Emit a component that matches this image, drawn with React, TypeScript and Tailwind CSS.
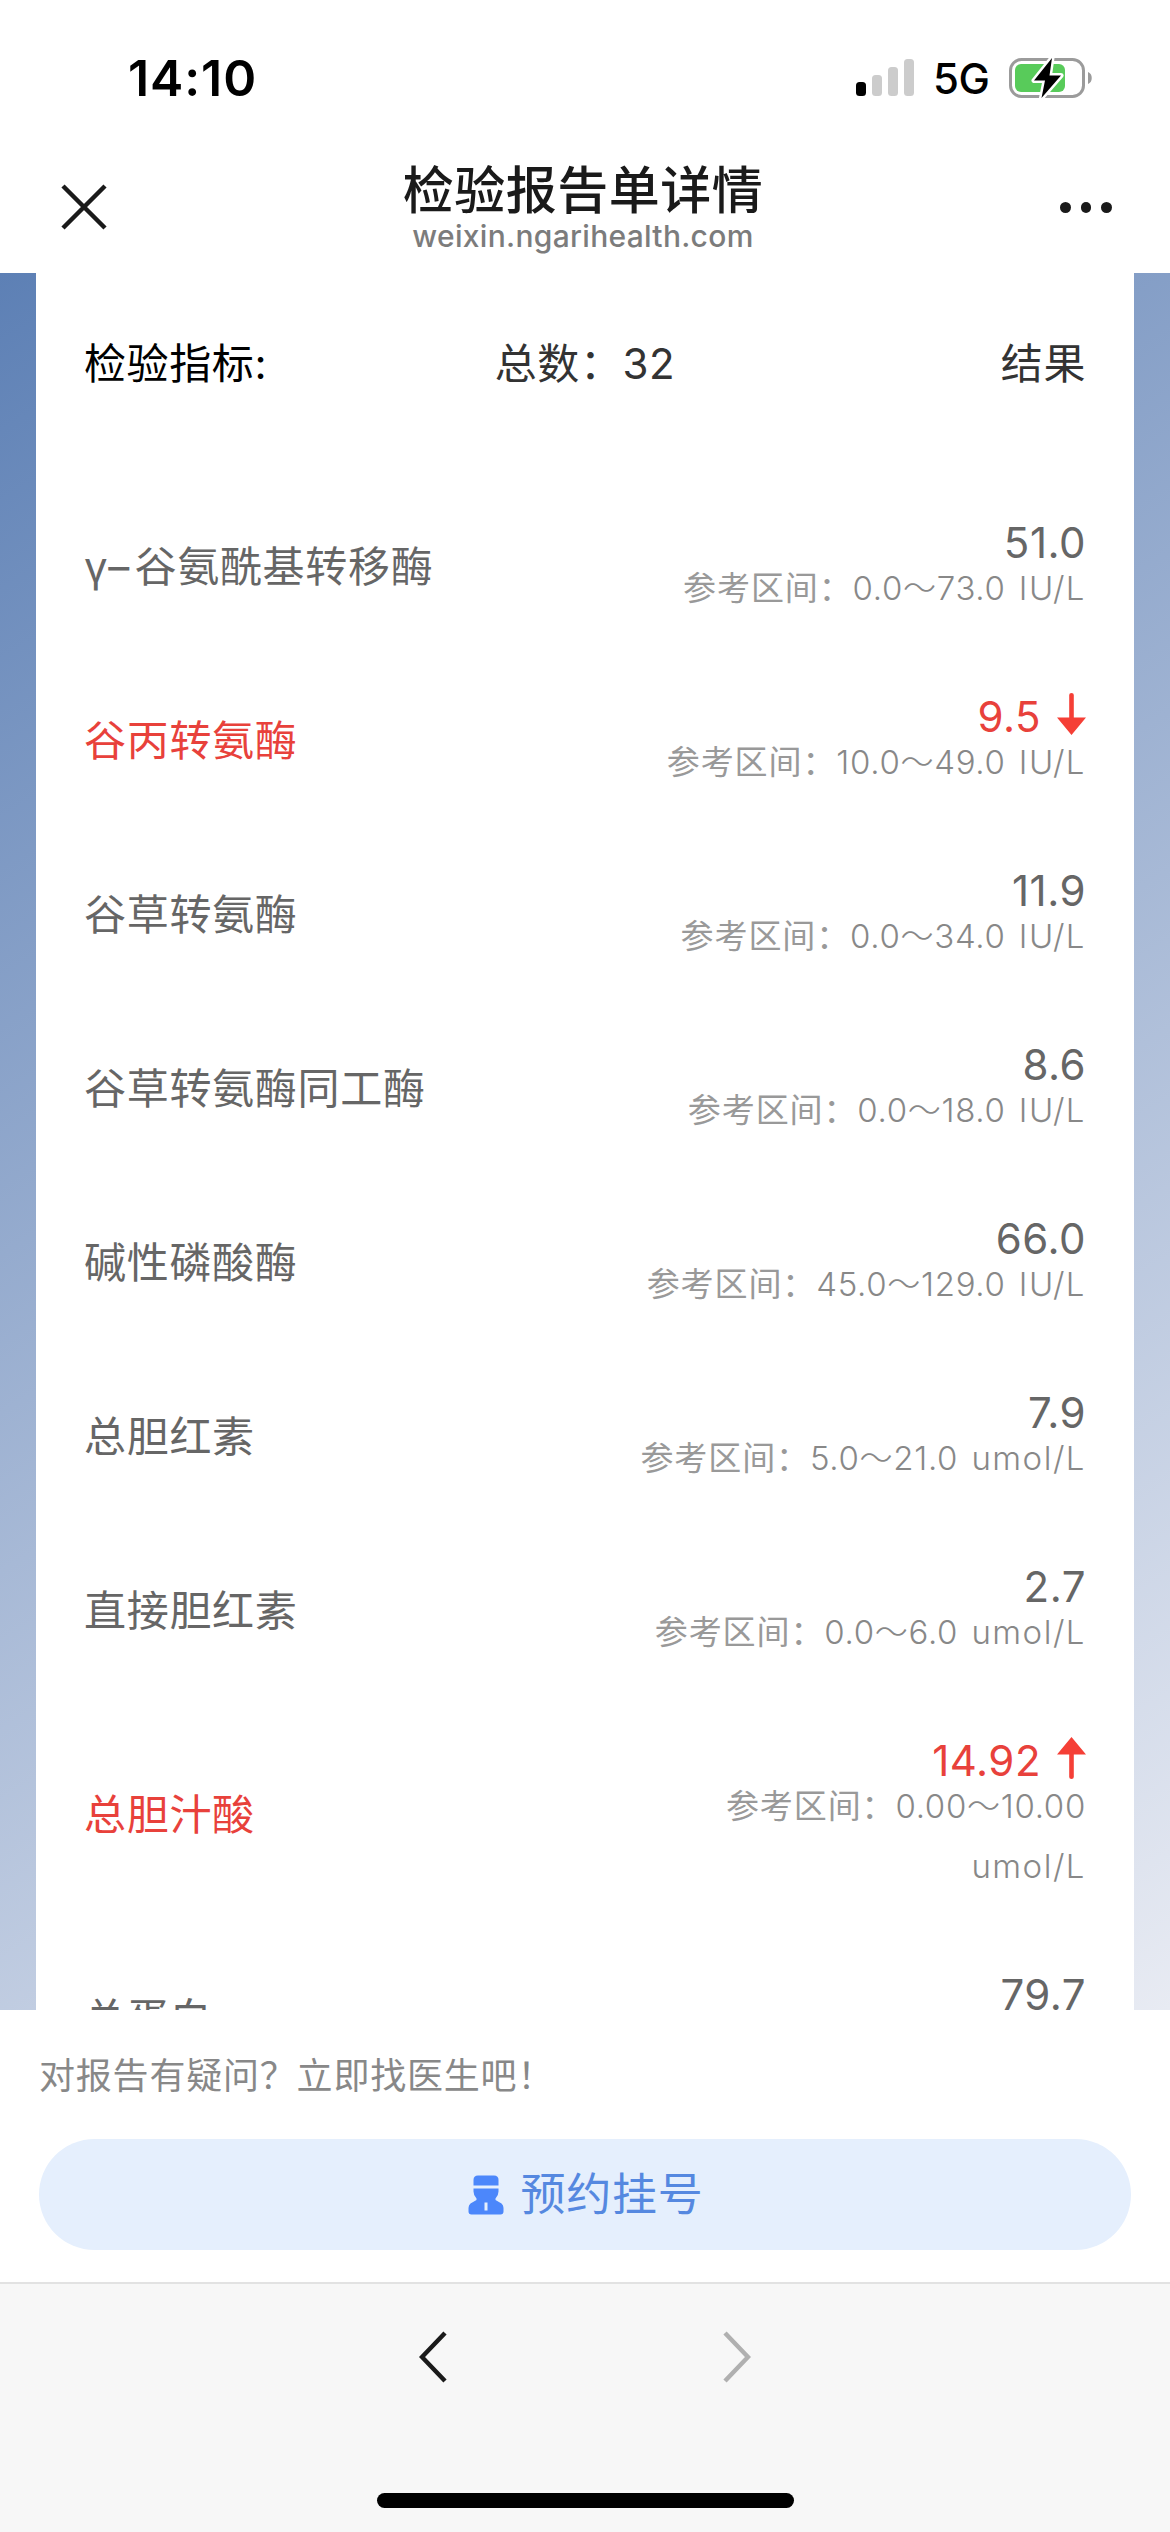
interface ReportItem {
	name: string;
	value: string;
	range: string;
	unit: string;
	trend?: "up" | "down";
}

const items: ReportItem[] = [
	{ name: "γ–\u200a谷氨酰基转移酶", value: "51.0", range: "0.0～73.0", unit: "IU/L" },
	{ name: "谷丙转氨酶", value: "9.5", range: "10.0～49.0", unit: "IU/L", trend: "down" },
	{ name: "谷草转氨酶", value: "11.9", range: "0.0～34.0", unit: "IU/L" },
	{ name: "谷草转氨酶同工酶", value: "8.6", range: "0.0～18.0", unit: "IU/L" },
	{ name: "碱性磷酸酶", value: "66.0", range: "45.0～129.0", unit: "IU/L" },
	{ name: "总胆红素", value: "7.9", range: "5.0～21.0", unit: "umol/L" },
	{ name: "直接胆红素", value: "2.7", range: "0.0～6.0", unit: "umol/L" },
	{ name: "总胆汁酸", value: "14.92", range: "0.00～10.00", unit: "umol/L", trend: "up" },
	{ name: "总蛋白", value: "79.7", range: "65.0～85.0", unit: "g/L" },
];

const StatusBar = () => {
	return (
		<div className="flex h-[141px] items-center justify-between pt-[15px] pr-[77px] pl-[128px]">
			<span className="text-[50px] leading-none font-semibold tracking-[0.9px] text-black">14:10</span>
			<div className="flex items-center">
				<svg width="60" height="38" viewBox="0 0 60 38">
					<rect x="0" y="23" width="10" height="14" rx="3.5" fill="#000" />
					<rect x="16" y="16" width="10" height="21" rx="3.5" fill="#ccc" />
					<rect x="32" y="8" width="10" height="29" rx="3.5" fill="#ccc" />
					<rect x="48" y="0" width="10" height="37" rx="3.5" fill="#ccc" />
				</svg>
				<span className="ml-[17px] w-[76px] pt-0.5 text-[42px] leading-none font-medium tracking-[-0.5px] text-black">5G</span>
				<svg width="84" height="42" viewBox="0 0 84 42">
					<rect x="1.5" y="2.5" width="73" height="37" rx="11" fill="none" stroke="#9b9b9b" strokeWidth="3" />
					<path d="M79 15c5 1.5 5 10.500 0 12z" fill="#9b9b9b" />
					<rect x="6" y="7" width="50" height="28" rx="6" fill="#58cb5a" />
					<path
						d="M43 1L25 23.500h11L32.500 41 52 18.500H40.500z"
						fill="#000"
						stroke="#fff"
						strokeWidth="5"
						strokeLinejoin="round"
						paintOrder="stroke"
					/>
				</svg>
			</div>
		</div>
	);
};

const NavBar = () => {
	return (
		<div className="flex h-[132px] items-center justify-between pr-[58px] pl-[60px]">
			<svg width="48" height="48" viewBox="0 0 48 48" stroke="#1a1a1a" strokeWidth="4.500">
				<path d="M3 3l42 42M45 3L3 45" />
			</svg>
			<div className="flex flex-col items-center pr-0.5 pb-0.5">
				<h1 className="text-[51px] leading-[60px] font-medium tracking-[0.5px] text-[#1a1a1a]">检验报告单详情</h1>
				<span className="-mt-px text-[30px] leading-8 font-medium tracking-[0.3px] text-[#7c7c7c]">weixin.ngarihealth.com</span>
			</div>
			<div className="flex w-[52px] gap-2.5">
				<span className="size-[11px] rounded-full bg-[#1a1a1a]" />
				<span className="size-[11px] rounded-full bg-[#1a1a1a]" />
				<span className="size-[11px] rounded-full bg-[#1a1a1a]" />
			</div>
		</div>
	);
};

const TrendArrow = ({ trend }: { trend: "up" | "down" }) => {
	return (
		<svg
			width="29"
			height="42"
			viewBox="0 0 29 42"
			fill="#f53f36"
			className={trend === "up" ? "mb-1.5 ml-4" : "mb-1.5 ml-4 rotate-180"}
		>
			<path d="M14.500 0L29 17.500H16.800V40a2.300 2 0 0 1-4.600 0V17.500H0z" />
		</svg>
	);
};

const ReportRow = ({ item }: { item: ReportItem }) => {
	const color = item.trend ? "text-[#e8413b]" : "text-[#666]";

	return (
		<li className="flex items-center justify-between">
			<span className={`text-[42px] leading-[60px] tracking-[0.7px] ${color}`}>{item.name}</span>
			<div className="flex w-[450px] flex-col pt-[42px] pb-9">
				<div className={`flex h-[42px] items-center justify-end text-[42px] leading-[42px] tracking-[0.5px] ${color}`}>
					{item.value}
					{item.trend && <TrendArrow trend={item.trend} />}
				</div>
				<p className="-mt-1.5 text-right text-[33px] leading-[60px] tracking-[0.9px] text-[#999] [word-spacing:3px]">
					参考区间：
					<span className="font-light tracking-[0.7px] text-[#888]">{item.range}</span>{" "}
					<span className="font-light tracking-[1.5px] text-[#888]">{item.unit}</span>
				</p>
			</div>
		</li>
	);
};

const DoctorIcon = () => {
	return (
		<svg width="36" height="40" viewBox="0 0 36 40" fill="#4c87fb">
			<path d="M5.500 10.500V5q0-4.500 4.500-4.500h16q4.500 0 4.500 4.500v5.500z" />
			<path
				fillRule="evenodd"
				d="M5.500 13.500h25v3q0 4-3 7v1.500l6 3.500q2 1.500 2 4.500v3.500q0 3-3 3h-29q-3 0-3-3V33q0-3 2-4.500l6-3.500v-1.500q-3-3-3-7zM16.500 27.500v8h3v-8z"
			/>
		</svg>
	);
};

const App = () => {
	return (
		<div className="flex h-[2532px] w-[1170px] flex-col overflow-hidden bg-white font-[Inter,'Noto_Sans_CJK_SC',sans-serif]">
			<StatusBar />
			<NavBar />

			<main className="h-[1737px] overflow-hidden bg-[linear-gradient(149deg,#5d80b5_0%,#e8ebf3_100%)] px-9">
				<section className="h-full bg-white px-12">
					<div className="grid h-[207px] grid-cols-3 pt-[61px] text-[42px] leading-[60px] tracking-[0.6px] text-[#333]">
						<span className="text-black">检验指标:</span>
						<span className="text-center">总数：32</span>
						<span className="text-right">结果</span>
					</div>
					<ul>
						{items.map((item) => (
							<ReportRow key={item.name} item={item} />
						))}
					</ul>
				</section>
			</main>

			<footer className="h-[272px] px-[39px] pt-[42px]">
				<p className="text-[36px] leading-[48px] tracking-[0.8px] text-[#888]">对报告有疑问？立即找医生吧！</p>
				<button className="mt-[39px] flex h-[111px] w-full items-center justify-center gap-4 rounded-full bg-[#e5effd] pt-px pl-0.5 text-[45px] tracking-[0.8px] text-[#5588e0]">
					<DoctorIcon />
					预约挂号
				</button>
			</footer>

			<nav className="flex flex-1 flex-col items-center justify-between border-t-2 border-[#e2e2e2] bg-[#f7f7f7] pt-[46px] pb-6">
				<div className="flex w-[332px] justify-between">
					<svg width="28" height="54" viewBox="0 0 28 54" fill="none" stroke="#1a1a1a" strokeWidth="4.500">
						<path d="M26 3L3 27l23 24" />
					</svg>
					<svg width="28" height="54" viewBox="0 0 28 54" fill="none" stroke="#b0b0b0" strokeWidth="4.500">
						<path d="M2 3l23 24L2 51" />
					</svg>
				</div>
				<div className="h-[15px] w-[417px] rounded-full bg-black" />
			</nav>
		</div>
	);
};

export default App;
